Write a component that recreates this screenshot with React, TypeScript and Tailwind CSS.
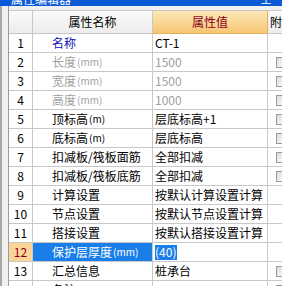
import React from 'react';

interface Row {
  no: number;
  name: string;
  unit?: string;
  value: string;
  tone: 'blue' | 'gray' | 'black';
  check: boolean;
}

const rows: Row[] = [
  { no: 1, name: '名称', value: 'CT-1', tone: 'blue', check: false },
  { no: 2, name: '长度', unit: '(mm)', value: '1500', tone: 'gray', check: true },
  { no: 3, name: '宽度', unit: '(mm)', value: '1500', tone: 'gray', check: true },
  { no: 4, name: '高度', unit: '(mm)', value: '1000', tone: 'gray', check: true },
  { no: 5, name: '顶标高', unit: '(m)', value: '层底标高+1', tone: 'black', check: true },
  { no: 6, name: '底标高', unit: '(m)', value: '层底标高', tone: 'black', check: true },
  { no: 7, name: '扣减板/筏板面筋', value: '全部扣减', tone: 'black', check: true },
  { no: 8, name: '扣减板/筏板底筋', value: '全部扣减', tone: 'black', check: true },
  { no: 9, name: '计算设置', value: '按默认计算设置计算', tone: 'black', check: false },
  { no: 10, name: '节点设置', value: '按默认节点设置计算', tone: 'black', check: false },
  { no: 11, name: '搭接设置', value: '按默认搭接设置计算', tone: 'black', check: false },
  { no: 12, name: '保护层厚度', unit: '(mm)', value: '(40)', tone: 'black', check: false },
  { no: 13, name: '汇总信息', value: '桩承台', tone: 'black', check: true },
  { no: 14, name: '备注', value: '', tone: 'black', check: true },
];

const font = { fontFamily: '"Noto Sans CJK SC", "DejaVu Sans", sans-serif' };

export default function App() {
  return (
    <div className="w-[282px] h-[286px] overflow-hidden bg-white text-[12px] leading-none" style={font}>
      {/* title bar */}
      <div className="h-[6px] overflow-hidden bg-[#0a5ad6] flex justify-between pl-[11px] pr-[10px]">
        <span className="text-white text-[12px] leading-[12px] mt-[-7px]">属性编辑器</span>
        <span className="text-white text-[12px] leading-[12px] mt-[-7px]">⊥</span>
      </div>

      <div className="flex h-[280px]">
        {/* left panel edge */}
        <div className="w-[9px] shrink-0 flex">
          <div className="w-[2px] bg-[#a8a8a8]" />
          <div className="w-[7px] bg-[#f0f0f0] border-r border-[#9c9c9c]" />
        </div>

        <div className="flex-1 flex flex-col pt-[4px] bg-[#f0f0f0]">
          {/* header */}
          <div className="flex h-[24px] bg-white border-t border-[#c8c8c8] shrink-0">
            <div className="w-[24px] shrink-0 bg-gradient-to-b from-[#fafafa] to-[#ececec] border-r border-b border-[#c8c8c8]" />
            <div className="w-[120px] shrink-0 bg-gradient-to-b from-[#fafafa] to-[#ececec] border-r border-b border-[#c8c8c8] flex items-center justify-center text-black">
              属性名称
            </div>
            <div className="w-[115px] shrink-0 bg-gradient-to-b from-[#fde9b8] to-[#f6c573] border-r border-b border-[#e0b060] flex items-center justify-center text-[#8a0020]">
              属性值
            </div>
            <div className="flex-1 bg-gradient-to-b from-[#fafafa] to-[#ececec] border-b border-[#c8c8c8] flex items-center pl-[2px] text-black">
              附
            </div>
          </div>

          {rows.map((r) => {
            const sel = r.no === 12;
            const tone =
              r.tone === 'blue' ? 'text-[#1010c0]' : r.tone === 'gray' ? 'text-[#a0a0a0]' : 'text-black';
            return (
              <div key={r.no} className="flex h-[19px] shrink-0 bg-white">
                <div
                  className={`w-[24px] shrink-0 border-r border-b border-[#c8c8c8] flex items-center justify-center ${
                    sel ? 'bg-[#fcd49a] text-[#8a0020]' : 'bg-white text-black'
                  }`}
                >
                  {r.no}
                </div>
                <div
                  className={`w-[120px] shrink-0 border-r border-b border-[#c8c8c8] flex items-center pl-[19px] whitespace-nowrap overflow-hidden ${
                    sel ? 'bg-[#1a7ee8] text-white' : tone
                  }`}
                >
                  {r.name}
                  {r.unit && <span className="text-[10px] ml-[1px]">{r.unit}</span>}
                </div>
                <div
                  className={`w-[115px] shrink-0 border-r border-b border-[#c8c8c8] flex items-center pl-[2px] whitespace-nowrap overflow-hidden ${
                    r.tone === 'gray' ? 'text-[#a0a0a0]' : 'text-black'
                  }`}
                >
                  {sel ? (
                    <span className="bg-[#1a7ee8] text-white h-[15px] flex items-center pr-[1px]">{r.value}</span>
                  ) : (
                    r.value
                  )}
                </div>
                <div className="flex-1 border-b border-[#c8c8c8] flex items-center pl-[8px]">
                  {r.check && (
                    <div className="w-[11px] h-[11px] shrink-0 border border-[#9a9a9a] bg-gradient-to-br from-[#dcdcdc] to-white" />
                  )}
                </div>
              </div>
            );
          })}
        </div>
      </div>
    </div>
  );
}
